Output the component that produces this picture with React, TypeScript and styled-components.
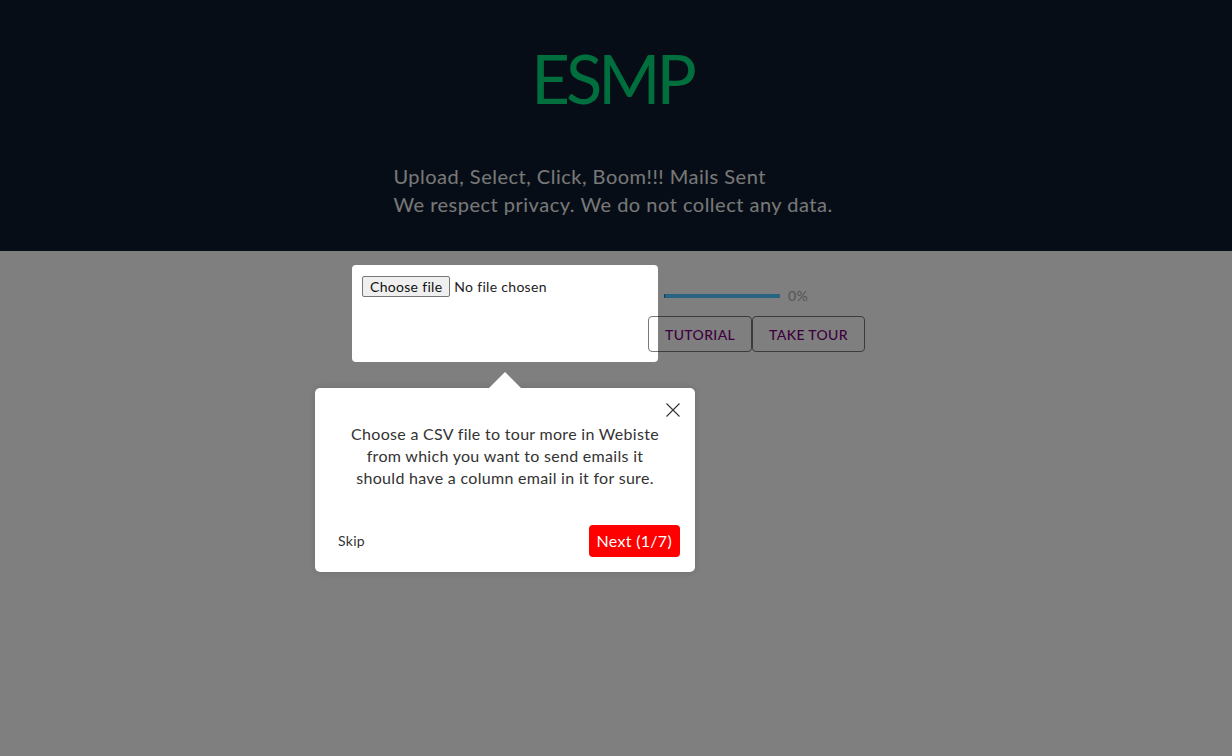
import React from "react";
import styled, { createGlobalStyle } from "styled-components";

const GlobalStyle = createGlobalStyle`
  body {
    margin: 0;
    background: #fff;
    font-family: Lato, "Noto Sans", sans-serif;
    letter-spacing: 0.3px;
  }
`;

const Page = styled.div`
  min-height: 756px;
  background: #fff;
`;

const Header = styled.header`
  background: #0c1a2c;
  padding: 38px 0 33px;
  text-align: center;
`;

const Title = styled.h1`
  margin: 0 0 44px;
  padding-right: 8px;
  font-size: 67px;
  line-height: 80px;
  font-weight: 400;
  letter-spacing: -4px;
  color: #00de7a;
`;

const Tagline = styled.div`
  display: inline-block;
  margin-right: 6px;
  text-align: left;
  font-size: 20px;
  line-height: 28px;
  letter-spacing: 0.5px;
  color: #f0f0f0;
`;

const Main = styled.main`
  display: flex;
  justify-content: center;
  padding-top: 24px;
`;

const Row = styled.div`
  display: flex;
  align-items: stretch;
`;

const UploadBox = styled.div`
  position: relative;
  width: 286px;
  height: 77px;
  display: flex;
  align-items: flex-start;
  gap: 4px;
  padding-top: 1px;
  box-sizing: border-box;
  font-size: 14px;
  color: #222;
`;

const FileButton = styled.button`
  height: 21px;
  padding: 0 7px;
  border: 1px solid #767676;
  border-radius: 2px;
  background: #efefef;
  font-family: inherit;
  font-size: 14px;
  letter-spacing: 0.3px;
  color: #111;
`;

const FileName = styled.span`
  line-height: 21px;
`;

const Side = styled.div`
  display: flex;
  flex-direction: column;
  justify-content: space-between;
  width: 222px;
`;

const ProgressRow = styled.div`
  display: flex;
  align-items: center;
  gap: 8px;
  padding: 12px 0 0 16px;
  font-size: 14px;
  color: #aaa;
`;

const Track = styled.div`
  width: 116px;
  height: 4px;
  background: #50c8ff;
  border-left: 1px solid #1976d2;
  box-sizing: border-box;
`;

const Buttons = styled.div`
  display: flex;
`;

const OutlineButton = styled.button`
  height: 36px;
  padding: 0 16px;
  border: 1px solid #787878;
  border-radius: 4px;
  background: #fff;
  color: purple;
  font-family: inherit;
  font-size: 14px;
  font-weight: 500;
  letter-spacing: 0.35px;
  text-transform: uppercase;
`;

const Spotlight = styled.div`
  position: absolute;
  inset: -10px;
  border-radius: 4px;
  box-shadow: 0 0 0 3000px rgba(0, 0, 0, 0.5);
  z-index: 10;
  pointer-events: none;
`;

const Tooltip = styled.div`
  position: absolute;
  top: calc(100% + 36px);
  left: 50%;
  transform: translateX(-50%);
  width: 380px;
  box-sizing: border-box;
  padding: 15px;
  background: #fff;
  border-radius: 5px;
  box-shadow: 0 0 6px rgba(0, 0, 0, 0.15);
  z-index: 20;
  text-align: center;
  color: #333;
  font-size: 16px;

  &::before {
    content: "";
    position: absolute;
    top: -16px;
    left: 50%;
    transform: translateX(-50%);
    border-left: 16px solid transparent;
    border-right: 16px solid transparent;
    border-bottom: 16px solid #fff;
  }
`;

const Close = styled.button`
  position: absolute;
  top: 0;
  right: 0;
  padding: 15px;
  border: 0;
  background: none;
  line-height: 0;
`;

const Content = styled.div`
  padding: 20px 10px;
  line-height: 22px;
`;

const Footer = styled.div`
  display: flex;
  align-items: center;
  justify-content: space-between;
  margin-top: 15px;
`;

const Skip = styled.button`
  padding: 8px;
  border: 0;
  background: none;
  color: #333;
  font-family: inherit;
  font-size: 14px;
  letter-spacing: 0.3px;
`;

const Next = styled.button`
  padding: 8px;
  border: 0;
  border-radius: 4px;
  background: #ff0000;
  color: #fff;
  font-family: inherit;
  font-size: 16px;
  line-height: 16px;
  letter-spacing: 0.3px;
`;

const App = () => {
  return (
    <Page>
      <GlobalStyle />
      <Header>
        <Title>ESMP</Title>
        <Tagline>
          Upload, Select, Click, Boom!!! Mails Sent
          <br />
          We respect privacy. We do not collect any data.
        </Tagline>
      </Header>
      <Main>
        <Row>
          <UploadBox>
            <FileButton>Choose file</FileButton>
            <FileName>No file chosen</FileName>
            <Spotlight />
            <Tooltip>
              <Close aria-label="Close">
                <svg width="14" height="14" viewBox="0 0 14 14">
                  <path d="M0.5 0.5 L13.5 13.5 M13.5 0.5 L0.5 13.5" stroke="#333" strokeWidth="1.1" />
                </svg>
              </Close>
              <Content>
                Choose a CSV file to tour more in Webiste
                <br />
                from which you want to send emails it
                <br />
                should have a column email in it for sure.
              </Content>
              <Footer>
                <Skip>Skip</Skip>
                <Next>Next (1/7)</Next>
              </Footer>
            </Tooltip>
          </UploadBox>
          <Side>
            <ProgressRow>
              <Track />
              <span>0%</span>
            </ProgressRow>
            <Buttons>
              <OutlineButton>Tutorial</OutlineButton>
              <OutlineButton>Take Tour</OutlineButton>
            </Buttons>
          </Side>
        </Row>
      </Main>
    </Page>
  );
};

export default App;
